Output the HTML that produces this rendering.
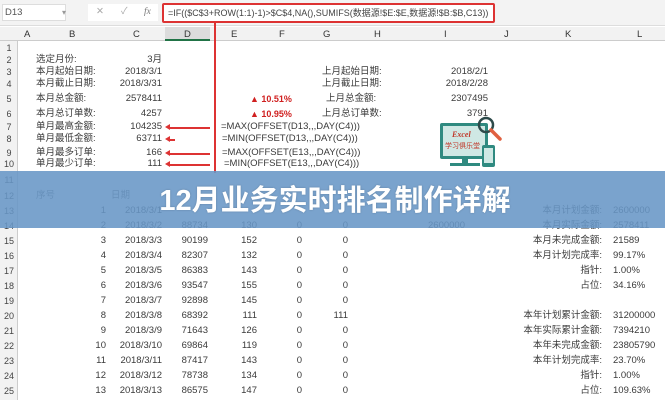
<!DOCTYPE html>
<html><head><meta charset="utf-8"><style>
*{margin:0;padding:0;box-sizing:border-box}
body{width:665px;height:400px;overflow:hidden;background:#fff;font-family:"Liberation Sans","Noto Sans CJK SC",sans-serif;font-size:9.5px;color:#3a3a3a;position:relative}
.a{position:absolute;white-space:nowrap;line-height:12px}
.r{text-align:right}
.rh{position:absolute;left:0;width:18px;text-align:center;font-size:9px;color:#444;line-height:12px}
.ch{position:absolute;top:29px;font-size:9.5px;color:#333;line-height:11px}
.red{color:#d02020}
.arr{position:absolute;height:1.5px;background:#d33}
.arr:before{content:"";position:absolute;left:-5px;top:-3px;border-right:5px solid #d33;border-top:3.5px solid transparent;border-bottom:3.5px solid transparent}
</style></head><body>
<div style="position:absolute;left:0;top:0;width:665px;height:26px;background:#f3f3f3;border-bottom:1px solid #ddd"></div>
<div style="position:absolute;left:2px;top:4px;width:64px;height:17px;background:#fff;border:1px solid #ddd"></div>
<div class="a" style="left:5px;top:7px;color:#555">D13</div>
<div class="a" style="left:62px;top:7px;color:#999;font-size:8px">▾</div>
<div style="position:absolute;left:88px;top:4px;width:70px;height:17px;background:#fff"></div>
<div class="a" style="left:96px;top:6px;color:#aaa">✕</div>
<div class="a" style="left:121px;top:6px;color:#aaa">✓</div>
<div class="a" style="left:144px;top:6px;color:#777;font-style:italic;font-family:'Liberation Serif',serif">fx</div>
<div style="position:absolute;left:162px;top:3px;width:333px;height:20px;background:#fff;border:2px solid #d33;border-radius:2px"></div>
<div class="a" style="left:168px;top:7px;font-size:9px;color:#444">=IF(($C$3+ROW(1:1)-1)&gt;$C$4,NA(),SUMIFS(数据源!$E:$E,数据源!$B:$B,C13))</div>
<div style="position:absolute;left:0;top:27px;width:665px;height:14px;background:#f2f2f2;border-bottom:1px solid #ccc"></div>
<div style="position:absolute;left:165px;top:27px;width:45px;height:14px;background:#dcdcdc;border-bottom:2px solid #217346"></div>
<div class="ch" style="left:24px">A</div><div class="ch" style="left:69px">B</div><div class="ch" style="left:133px">C</div><div class="ch" style="left:184px">D</div><div class="ch" style="left:231px">E</div><div class="ch" style="left:279px">F</div><div class="ch" style="left:323px">G</div><div class="ch" style="left:374px">H</div><div class="ch" style="left:444px">I</div><div class="ch" style="left:504px">J</div><div class="ch" style="left:565px">K</div><div class="ch" style="left:637px">L</div>
<div style="position:absolute;left:0;top:41px;width:18px;height:359px;background:#f2f2f2;border-right:1px solid #ccc"></div>
<div class="rh" style="top:42px">1</div><div class="rh" style="top:54px">2</div><div class="rh" style="top:66px">3</div><div class="rh" style="top:78px">4</div><div class="rh" style="top:93px">5</div><div class="rh" style="top:108px">6</div><div class="rh" style="top:121px">7</div><div class="rh" style="top:133px">8</div><div class="rh" style="top:147px">9</div><div class="rh" style="top:158px">10</div>
<div class="rh" style="top:174px">11</div><div class="rh" style="top:190px">12</div><div class="rh" style="top:205px">13</div><div class="rh" style="top:220px">14</div><div class="rh" style="top:235px">15</div><div class="rh" style="top:250px">16</div><div class="rh" style="top:265px">17</div><div class="rh" style="top:280px">18</div><div class="rh" style="top:295px">19</div><div class="rh" style="top:310px">20</div><div class="rh" style="top:325px">21</div><div class="rh" style="top:340px">22</div><div class="rh" style="top:355px">23</div><div class="rh" style="top:370px">24</div><div class="rh" style="top:385px">25</div>
<div class="a" style="left:36px;top:54px">选定月份:</div><div class="a r" style="left:120px;top:54px;width:42px">3月</div>
<div class="a" style="left:36px;top:66px">本月起始日期:</div><div class="a r" style="left:100px;top:66px;width:62px">2018/3/1</div>
<div class="a" style="left:36px;top:78px">本月截止日期:</div><div class="a r" style="left:100px;top:78px;width:62px">2018/3/31</div>
<div class="a" style="left:36px;top:93px">本月总金额:</div><div class="a r" style="left:100px;top:93px;width:62px">2578411</div>
<div class="a" style="left:36px;top:108px">本月总订单数:</div><div class="a r" style="left:100px;top:108px;width:62px">4257</div>
<div class="a" style="left:36px;top:121px">单月最高金额:</div><div class="a r" style="left:100px;top:121px;width:62px">104235</div>
<div class="a" style="left:36px;top:133px">单月最低金额:</div><div class="a r" style="left:100px;top:133px;width:62px">63711</div>
<div class="a" style="left:36px;top:147px">单月最多订单:</div><div class="a r" style="left:100px;top:147px;width:62px">166</div>
<div class="a" style="left:36px;top:158px">单月最少订单:</div><div class="a r" style="left:100px;top:158px;width:62px">111</div>
<div class="arr" style="left:170px;top:127px;width:40px"></div>
<div class="arr" style="left:170px;top:139px;width:5px"></div>
<div class="arr" style="left:170px;top:153px;width:40px"></div>
<div class="arr" style="left:170px;top:164px;width:40px"></div>
<div style="position:absolute;left:214px;top:23px;width:2px;height:150px;background:#d33"></div>
<div class="a" style="left:221px;top:121px">=MAX(OFFSET(D13,,,DAY(C4)))</div>
<div class="a" style="left:222px;top:133px">=MIN(OFFSET(D13,,,DAY(C4)))</div>
<div class="a" style="left:222px;top:147px">=MAX(OFFSET(E13,,,DAY(C4)))</div>
<div class="a" style="left:224px;top:158px">=MIN(OFFSET(E13,,,DAY(C4)))</div>
<div class="a red" style="left:250px;top:93px;font-size:9px;font-weight:bold">▲ 10.51%</div>
<div class="a red" style="left:250px;top:108px;font-size:9px;font-weight:bold">▲ 10.95%</div>
<div class="a" style="left:322px;top:66px">上月起始日期:</div><div class="a r" style="left:420px;top:66px;width:68px">2018/2/1</div>
<div class="a" style="left:322px;top:78px">上月截止日期:</div><div class="a r" style="left:420px;top:78px;width:68px">2018/2/28</div>
<div class="a" style="left:326px;top:93px">上月总金额:</div><div class="a r" style="left:420px;top:93px;width:68px">2307495</div>
<div class="a" style="left:322px;top:108px">上月总订单数:</div><div class="a r" style="left:420px;top:108px;width:68px">3791</div>
<svg style="position:absolute;left:436px;top:115px" width="70" height="60" viewBox="0 0 70 60">
<rect x="4" y="8" width="48" height="36" rx="2" fill="#2f8a80"/><rect x="7" y="11" width="42" height="30" fill="#cfe8e4"/>
<text x="16" y="22" font-size="8" fill="#c0392b" font-style="italic" font-weight="bold" font-family="Liberation Serif">Excel</text>
<text x="9" y="33" font-size="7" fill="#c0392b" font-family="Noto Sans CJK SC">学习俱乐堂</text>
<rect x="26" y="44" width="6" height="5" fill="#2f8a80"/><rect x="14" y="48" width="30" height="3" fill="#2f8a80"/>
<rect x="46" y="30" width="13" height="22" rx="2" fill="#2f8a80"/><rect x="48" y="33" width="9" height="15" fill="#cfe8e4"/>
<circle cx="50" cy="10" r="7" fill="none" stroke="#2d4a4a" stroke-width="2.5"/><line x1="55" y1="15" x2="64" y2="24" stroke="#e06040" stroke-width="3.5" stroke-linecap="round"/>
</svg>
<div class="a" style="left:36px;top:190px;color:#666">序号</div><div class="a" style="left:111px;top:190px;color:#666">日期</div>
<div class="a r" style="left:70px;top:205px;width:36px">1</div><div class="a r" style="left:110px;top:205px;width:52px">2018/3/1</div>
<div class="a r" style="left:70px;top:220px;width:36px">2</div><div class="a r" style="left:110px;top:220px;width:52px">2018/3/2</div><div class="a r" style="left:170px;top:220px;width:38px">88734</div><div class="a r" style="left:220px;top:220px;width:37px">130</div><div class="a r" style="left:280px;top:220px;width:22px">0</div><div class="a r" style="left:330px;top:220px;width:18px">0</div><div class="a r" style="left:400px;top:220px;width:65px">2600000</div>
<div class="a r" style="left:70px;top:235px;width:36px">3</div><div class="a r" style="left:110px;top:235px;width:52px">2018/3/3</div><div class="a r" style="left:170px;top:235px;width:38px">90199</div><div class="a r" style="left:220px;top:235px;width:37px">152</div><div class="a r" style="left:280px;top:235px;width:22px">0</div><div class="a r" style="left:330px;top:235px;width:18px">0</div>
<div class="a r" style="left:70px;top:250px;width:36px">4</div><div class="a r" style="left:110px;top:250px;width:52px">2018/3/4</div><div class="a r" style="left:170px;top:250px;width:38px">82307</div><div class="a r" style="left:220px;top:250px;width:37px">132</div><div class="a r" style="left:280px;top:250px;width:22px">0</div><div class="a r" style="left:330px;top:250px;width:18px">0</div>
<div class="a r" style="left:70px;top:265px;width:36px">5</div><div class="a r" style="left:110px;top:265px;width:52px">2018/3/5</div><div class="a r" style="left:170px;top:265px;width:38px">86383</div><div class="a r" style="left:220px;top:265px;width:37px">143</div><div class="a r" style="left:280px;top:265px;width:22px">0</div><div class="a r" style="left:330px;top:265px;width:18px">0</div>
<div class="a r" style="left:70px;top:280px;width:36px">6</div><div class="a r" style="left:110px;top:280px;width:52px">2018/3/6</div><div class="a r" style="left:170px;top:280px;width:38px">93547</div><div class="a r" style="left:220px;top:280px;width:37px">155</div><div class="a r" style="left:280px;top:280px;width:22px">0</div><div class="a r" style="left:330px;top:280px;width:18px">0</div>
<div class="a r" style="left:70px;top:295px;width:36px">7</div><div class="a r" style="left:110px;top:295px;width:52px">2018/3/7</div><div class="a r" style="left:170px;top:295px;width:38px">92898</div><div class="a r" style="left:220px;top:295px;width:37px">145</div><div class="a r" style="left:280px;top:295px;width:22px">0</div><div class="a r" style="left:330px;top:295px;width:18px">0</div>
<div class="a r" style="left:70px;top:310px;width:36px">8</div><div class="a r" style="left:110px;top:310px;width:52px">2018/3/8</div><div class="a r" style="left:170px;top:310px;width:38px">68392</div><div class="a r" style="left:220px;top:310px;width:37px">111</div><div class="a r" style="left:280px;top:310px;width:22px">0</div><div class="a r" style="left:320px;top:310px;width:28px">111</div>
<div class="a r" style="left:70px;top:325px;width:36px">9</div><div class="a r" style="left:110px;top:325px;width:52px">2018/3/9</div><div class="a r" style="left:170px;top:325px;width:38px">71643</div><div class="a r" style="left:220px;top:325px;width:37px">126</div><div class="a r" style="left:280px;top:325px;width:22px">0</div><div class="a r" style="left:330px;top:325px;width:18px">0</div>
<div class="a r" style="left:70px;top:340px;width:36px">10</div><div class="a r" style="left:110px;top:340px;width:52px">2018/3/10</div><div class="a r" style="left:170px;top:340px;width:38px">69864</div><div class="a r" style="left:220px;top:340px;width:37px">119</div><div class="a r" style="left:280px;top:340px;width:22px">0</div><div class="a r" style="left:330px;top:340px;width:18px">0</div>
<div class="a r" style="left:70px;top:355px;width:36px">11</div><div class="a r" style="left:110px;top:355px;width:52px">2018/3/11</div><div class="a r" style="left:170px;top:355px;width:38px">87417</div><div class="a r" style="left:220px;top:355px;width:37px">143</div><div class="a r" style="left:280px;top:355px;width:22px">0</div><div class="a r" style="left:330px;top:355px;width:18px">0</div>
<div class="a r" style="left:70px;top:370px;width:36px">12</div><div class="a r" style="left:110px;top:370px;width:52px">2018/3/12</div><div class="a r" style="left:170px;top:370px;width:38px">78738</div><div class="a r" style="left:220px;top:370px;width:37px">134</div><div class="a r" style="left:280px;top:370px;width:22px">0</div><div class="a r" style="left:330px;top:370px;width:18px">0</div>
<div class="a r" style="left:70px;top:385px;width:36px">13</div><div class="a r" style="left:110px;top:385px;width:52px">2018/3/13</div><div class="a r" style="left:170px;top:385px;width:38px">86575</div><div class="a r" style="left:220px;top:385px;width:37px">147</div><div class="a r" style="left:280px;top:385px;width:22px">0</div><div class="a r" style="left:330px;top:385px;width:18px">0</div>
<div class="a r" style="left:480px;top:205px;width:122px">本月计划金额:</div><div class="a" style="left:613px;top:205px">2600000</div>
<div class="a r" style="left:480px;top:220px;width:122px">本月实际金额:</div><div class="a" style="left:613px;top:220px">2578411</div>
<div class="a r" style="left:480px;top:235px;width:122px">本月未完成金额:</div><div class="a" style="left:613px;top:235px">21589</div>
<div class="a r" style="left:480px;top:250px;width:122px">本月计划完成率:</div><div class="a" style="left:613px;top:250px">99.17%</div>
<div class="a r" style="left:480px;top:265px;width:122px">指针:</div><div class="a" style="left:613px;top:265px">1.00%</div>
<div class="a r" style="left:480px;top:280px;width:122px">占位:</div><div class="a" style="left:613px;top:280px">34.16%</div>
<div class="a r" style="left:480px;top:310px;width:122px">本年计划累计金额:</div><div class="a" style="left:613px;top:310px">31200000</div>
<div class="a r" style="left:480px;top:325px;width:122px">本年实际累计金额:</div><div class="a" style="left:613px;top:325px">7394210</div>
<div class="a r" style="left:480px;top:340px;width:122px">本年未完成金额:</div><div class="a" style="left:613px;top:340px">23805790</div>
<div class="a r" style="left:480px;top:355px;width:122px">本年计划完成率:</div><div class="a" style="left:613px;top:355px">23.70%</div>
<div class="a r" style="left:480px;top:370px;width:122px">指针:</div><div class="a" style="left:613px;top:370px">1.00%</div>
<div class="a r" style="left:480px;top:385px;width:122px">占位:</div><div class="a" style="left:613px;top:385px">109.63%</div>
<div style="position:absolute;left:0;top:171px;width:665px;height:57px;background:rgba(104,150,198,0.88)"></div>
<div class="a" style="left:0;top:183px;width:670px;text-align:center;color:#fff;font-size:29px;font-weight:bold;line-height:36px;font-family:'Liberation Sans','Noto Sans CJK SC',sans-serif;text-shadow:0 0 2px rgba(0,0,0,.2)">12月业务实时排名制作详解</div>
</body></html>
